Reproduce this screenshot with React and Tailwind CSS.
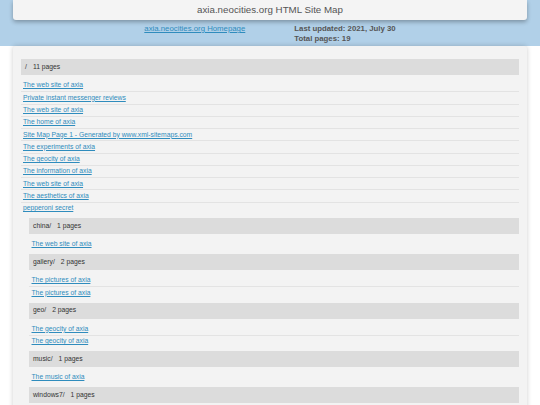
const mainLinks = [
  'The web site of axia',
  'Private instant messenger reviews',
  'The web site of axia',
  'The home of axia',
  'Site Map Page 1 - Generated by www.xml-sitemaps.com',
  'The experiments of axia',
  'The geocity of axia',
  'The information of axia',
  'The web site of axia',
  'The aesthetics of axia',
  'pepperoni secret',
]

const folders = [
  { name: 'china/', links: ['The web site of axia'] },
  { name: 'gallery/', links: ['The pictures of axia', 'The pictures of axia'] },
  { name: 'geo/', links: ['The geocity of axia', 'The geocity of axia'] },
  { name: 'music/', links: ['The music of axia'] },
  { name: 'windows7/', links: ['The windows of axia'] },
]

function Section({ name, count, links, pad }) {
  return (
    <div>
      <div className="h-[16px] bg-[#dcdcdc] pl-[4px] flex items-center text-[6.75px] text-[#333]">
        <span>{name}</span>
        <span className="ml-[6px]">{count} pages</span>
      </div>
      <ul className="my-[4px]">
        {links.map((l, i) => (
          <li
            key={i}
            className={`h-[12.25px] flex items-center text-[6.75px] ${pad} ${i > 0 ? 'border-t border-[#e3e3e3]' : ''}`}
          >
            <a href="#" className="text-[#2f8cbd] underline">{l}</a>
          </li>
        ))}
      </ul>
    </div>
  )
}

export default function App() {
  return (
    <div className="min-h-screen bg-white font-['Liberation_Sans',Arial,sans-serif] overflow-hidden">
      {/* top band */}
      <div className="h-[46px] bg-[#b1d0e8] px-[13px]">
        <div className="h-[20px] bg-[#f4f4f4] rounded-b-[3px] shadow-[0_2px_4px_rgba(0,0,0,0.3)] flex items-center justify-center text-[9.75px] text-[#555]">
          axia.neocities.org HTML Site Map
        </div>
        <div className="mt-[4px] flex justify-center items-start gap-[49px] text-[7.8px] leading-[10px]">
          <a href="#" className="text-[#2f8cbd] underline">axia.neocities.org Homepage</a>
          <div className="font-bold text-[#555]">
            <div>Last updated: 2021, July 30</div>
            <div>Total pages: 19</div>
          </div>
        </div>
      </div>

      {/* site map card */}
      <div className="mx-[13px] bg-[#f3f3f3] rounded-t-[3px] shadow-[0_0_5px_rgba(0,0,0,0.2)] px-[8px] pt-[13px] pb-4">
        <Section name="/" count={11} links={mainLinks} pad="pl-[2px]" />
        <div className="ml-[8px]">
          {folders.map(f => (
            <Section key={f.name} name={f.name} count={f.links.length} links={f.links} pad="pl-[2.5px]" />
          ))}
        </div>
      </div>
    </div>
  )
}
